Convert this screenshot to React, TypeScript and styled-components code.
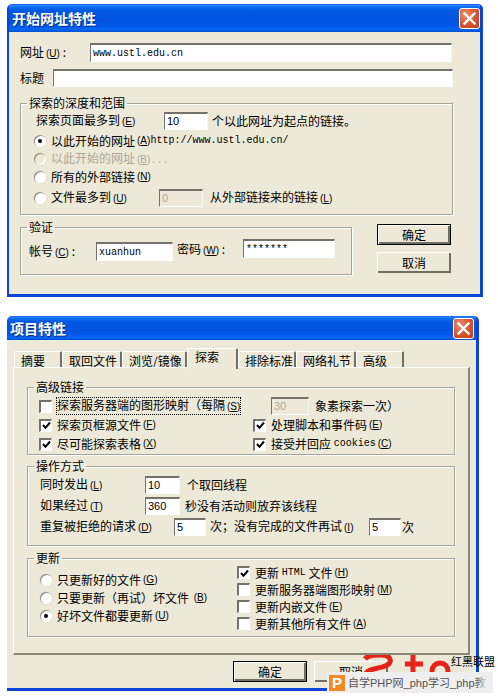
import React from 'react';
import styled, { createGlobalStyle } from 'styled-components';

const GlobalStyle = createGlobalStyle`
  html, body {
    margin: 0;
    padding: 0;
    background: #fff;
  }
  body {
    font-family: "Noto Sans CJK SC", "Liberation Sans", sans-serif;
    font-size: 12px;
    line-height: 14px;
    color: #000;
  }
  * {
    box-sizing: border-box;
  }
`;

const Page = styled.div`
  position: relative;
  width: 498px;
  height: 696px;
  overflow: hidden;
  padding: 4px 0 0 7px;
`;

const Window = styled.section<{ $w: number; $h: number; $left?: boolean; $top?: number }>`
  display: flex;
  flex-direction: column;
  width: ${p => p.$w}px;
  height: ${p => p.$h}px;
  margin-top: ${p => p.$top ?? 0}px;
  background: #ece9d8;
  border-radius: 5px 5px 0 0;
  border-right: 3px solid #0a45d8;
  border-bottom: 3px solid #0a45d8;
  border-left: ${p => (p.$left ? '2px solid #0a45d8' : '0')};
  overflow: hidden;
`;

const TitleBar = styled.header<{ $h: number; $pad: number; $right: number; $offset: number }>`
  display: flex;
  align-items: center;
  justify-content: space-between;
  flex: none;
  height: ${p => p.$h}px;
  margin-left: ${p => p.$offset}px;
  margin-right: -3px;
  padding: 0 ${p => p.$right}px 0 ${p => p.$pad}px;
  background: linear-gradient(180deg, #0a5ee6 0%, #2a86f5 5%, #0f6df0 10%, #0058e2 24%, #0053df 60%, #0058ec 78%, #0a66f2 90%, #0050d4 100%);
  color: #fff;
  font-size: 14px;
  font-weight: 700;
  text-shadow: 1px 1px 0 #0b2f86;
`;

const CloseButton = styled.div`
  display: flex;
  align-items: center;
  justify-content: center;
  width: 21px;
  height: 21px;
  border: 1px solid #fff;
  border-radius: 3px;
  background: radial-gradient(circle at 30% 30%, #ea8f72 0%, #dc5a34 45%, #c23a14 100%);
`;

const CloseIcon = () => (
  <svg width="15" height="15" viewBox="0 0 15 15">
    <path d="M2.5 2.5 L12.5 12.5 M12.5 2.5 L2.5 12.5" stroke="#fff" strokeWidth="2.4" strokeLinecap="square" />
  </svg>
);

const Hot = styled.span`
  font-family: "Liberation Sans", sans-serif;
  font-size: 10px;
  margin-left: 2px;
`;

const Mono = styled.span`
  font-family: "Liberation Mono", monospace;
  font-size: 10px;
`;

const Key = ({ k }: { k: string }) => (
  <Hot>
    (<u>{k}</u>)
  </Hot>
);

const Body = styled.div<{ $pad: string }>`
  flex: 1;
  padding: ${p => p.$pad};
`;

const FieldRow = styled.div<{ $top?: number }>`
  display: flex;
  align-items: center;
  margin-top: ${p => p.$top ?? 0}px;
`;

const Caption = styled.span<{ $w?: number; $ml?: number; $muted?: boolean; $drop?: number }>`
  flex: none;
  width: ${p => (p.$w ? `${p.$w}px` : 'auto')};
  margin-left: ${p => p.$ml ?? 0}px;
  padding-top: ${p => p.$drop ?? 0}px;
  color: ${p => (p.$muted ? '#aca899' : 'inherit')};
  white-space: nowrap;
`;

const TextBox = styled.div<{ $w: number; $h?: number; $top?: number; $disabled?: boolean }>`
  flex: none;
  width: ${p => p.$w}px;
  height: ${p => p.$h ?? 18}px;
  margin-top: ${p => p.$top ?? 0}px;
  padding-left: 2px;
  border-style: solid;
  border-width: 2px 1px 1px 1px;
  border-color: #74726a #f7f6ef #fff #74726a;
  background: ${p => (p.$disabled ? '#ece9d8' : '#fff')};
  color: ${p => (p.$disabled ? '#aca899' : '#000')};
  font-family: "Liberation Sans", sans-serif;
  font-size: 11px;
  line-height: 14px;
  white-space: nowrap;
  overflow: hidden;
`;

const Group = styled.fieldset<{ $w: number; $top?: number }>`
  width: ${p => p.$w}px;
  min-width: 0;
  margin: ${p => p.$top ?? 0}px 0 0;
  padding: 0;
  border: 1px solid #a5a496;
  box-shadow: 1px 1px 0 #fff, inset 1px 1px 0 #fff;
`;

const Legend = styled.legend`
  height: 14px;
  margin-left: 6px;
  padding: 0 2px;
  line-height: 14px;
`;

const GroupBody = styled.div<{ $pad: string }>`
  padding: ${p => p.$pad};
`;

const OptionRow = styled.div<{ $top?: number; $h?: number }>`
  display: flex;
  align-items: center;
  height: ${p => p.$h ?? 18}px;
  margin-top: ${p => p.$top ?? 0}px;
  white-space: nowrap;
`;

const RadioDot = styled.span<{ $on?: boolean; $disabled?: boolean }>`
  display: flex;
  align-items: center;
  justify-content: center;
  flex: none;
  width: 12px;
  height: 12px;
  margin-right: 5px;
  border-radius: 50%;
  background: ${p => (p.$disabled ? '#ece9d8' : '#fff')};
  box-shadow: inset 1px 1px 0 #8d8b7f, inset -1px -1px 0 #fff, 0 0 0 1px #e4e1d0;

  &::after {
    content: '';
    display: ${p => (p.$on ? 'block' : 'none')};
    width: 4px;
    height: 4px;
    border-radius: 50%;
    background: #000;
  }
`;

const CheckFrame = styled.span`
  display: flex;
  align-items: center;
  justify-content: center;
  flex: none;
  width: 13px;
  height: 13px;
  margin-right: 5px;
  border-style: solid;
  border-width: 2px 1px 1px 2px;
  border-color: #74726a #fff #fff #74726a;
  background: #fff;
`;

const CheckBox = ({ on }: { on?: boolean }) => (
  <CheckFrame>
    {on && (
      <svg width="9" height="9" viewBox="0 0 9 9">
        <path d="M1 4 L3.5 6.8 L8 1.5" fill="none" stroke="#000" strokeWidth="2" />
      </svg>
    )}
  </CheckFrame>
);

const BottomRow = styled.div`
  display: flex;
  align-items: flex-start;
  gap: 25px;
  margin-top: 5px;
`;

const ButtonStack = styled.div`
  display: flex;
  flex-direction: column;
  gap: 7px;
  margin-top: 4px;
`;

const PushButton = styled.div<{ $primary?: boolean }>`
  display: flex;
  align-items: center;
  justify-content: center;
  width: 74px;
  height: 21px;
  background: #ece9d8;
  box-shadow: ${p =>
    p.$primary
      ? 'inset 0 0 0 1px #000, inset 2px 2px 0 #fff, inset -3px -3px 0 #716f64'
      : 'inset 1px 1px 0 #fff, inset -2px -2px 0 #716f64'};
`;

const Credentials = styled.div`
  display: flex;
  align-items: flex-start;
  padding: 5px 0 13px 8px;
`;

const Pair = styled.div<{ $top?: number }>`
  display: flex;
  align-items: center;
  margin-top: ${p => p.$top ?? 0}px;
`;

const Tabs = styled.div`
  display: flex;
  align-items: flex-end;
  height: 28px;
  padding: 8px 0 0 7px;
`;

const Tab = styled.div<{ $w: number; $active?: boolean }>`
  position: relative;
  z-index: ${p => (p.$active ? 2 : 0)};
  flex: none;
  width: ${p => p.$w}px;
  height: ${p => (p.$active ? 21 : 17)}px;
  margin-bottom: ${p => (p.$active ? -1 : 0)}px;
  padding: ${p => (p.$active ? '1px 0 0 7px' : '2px 0 0 6px')};
  background: #ece9d8;
  border-top: 1px solid #fff;
  border-left: 1px solid #fff;
  border-right: 2px solid #716f64;
  border-radius: 2px 2px 0 0;
`;

const Panel = styled.div`
  position: relative;
  z-index: 1;
  width: 457px;
  height: 288px;
  margin: -1px 0 0 6px;
  padding: 12px 0 0 13px;
  border-style: solid;
  border-width: 1px 2px 2px 1px;
  border-color: #fff #8a8778 #8a8778 #fff;
  background: #ece9d8;
`;

const LinkGrid = styled.div`
  display: grid;
  grid-template-columns: 214px 1fr;
  row-gap: 1px;
  padding: 3px 0 1px 11px;
`;

const Focused = styled.span`
  outline: 1px dotted #000;
  outline-offset: 0;
`;

const Shifted = styled(OptionRow)`
  padding-left: 18px;
`;

const UpdateColumns = styled.div`
  display: flex;
  align-items: flex-start;
  padding: 0 0 4px 12px;
`;

const UpdateLeft = styled.div`
  flex: none;
  width: 197px;
  padding-top: 6px;
`;

const UpdateRight = styled.div`
  margin-top: -1px;
`;

const Footer = styled.div`
  display: flex;
  gap: 7px;
  margin-top: 6px;
  padding-left: 226px;
`;

const Logo = styled.svg`
  position: absolute;
  left: 360px;
  top: 651px;
`;

const LogoCaption = styled.span`
  position: absolute;
  left: 451px;
  top: 654px;
  font-size: 11px;
  white-space: nowrap;
`;

const AdBar = styled.div`
  position: absolute;
  left: 327px;
  top: 672px;
  display: flex;
  align-items: center;
  gap: 3px;
  width: 166px;
  height: 21px;
  padding-left: 2px;
  background: #eeeeee;
  color: #555;
  font-family: "Liberation Sans", "Noto Sans CJK SC", sans-serif;
  font-size: 11px;
  white-space: nowrap;
  overflow: hidden;

  &::after {
    content: '';
    position: absolute;
    right: 8px;
    top: 0;
    width: 10px;
    height: 100%;
    background: linear-gradient(90deg, rgba(238, 238, 238, 0), rgba(238, 238, 238, 0.7));
  }
`;

const AdIcon = styled.span`
  display: flex;
  align-items: center;
  justify-content: center;
  flex: none;
  width: 16px;
  height: 16px;
  background: #f08a24;
  color: #fff;
  font-family: "Liberation Sans", sans-serif;
  font-size: 15px;
  font-weight: 700;
`;

export default function App() {
  return (
    <Page>
      <GlobalStyle />

      <Window $w={476} $h={293} $left>
        <TitleBar $h={28} $pad={5} $right={3} $offset={-2}>
          <span>开始网址特性</span>
          <CloseButton><CloseIcon /></CloseButton>
        </TitleBar>
        <Body $pad="11px 0 0 11px">
          <FieldRow>
            <Caption $w={70}>网址<Key k="U" /> :</Caption>
            <TextBox $w={362} $h={19}><Mono>www.ustl.edu.cn</Mono></TextBox>
          </FieldRow>
          <FieldRow $top={7}>
            <Caption $w={33}>标题</Caption>
            <TextBox $w={400} />
          </FieldRow>

          <Group $w={433} $top={9}>
            <Legend>探索的深度和范围</Legend>
            <GroupBody $pad="2px 0 7px 13px">
              <FieldRow>
                <Caption $w={128} $ml={2}>探索页面最多到<Key k="E" /></Caption>
                <TextBox $w={44}>10</TextBox>
                <Caption $ml={4}>个以此网址为起点的链接。</Caption>
              </FieldRow>
              <OptionRow $top={2}>
                <RadioDot $on />
                以此开始的网址<Key k="A" /><Mono>http://www.ustl.edu.cn/</Mono>
              </OptionRow>
              <OptionRow>
                <RadioDot $disabled />
                <Caption $muted>以此开始的网址<Key k="B" /><Mono>...</Mono></Caption>
              </OptionRow>
              <OptionRow>
                <RadioDot />
                所有的外部链接<Key k="N" />
              </OptionRow>
              <OptionRow $top={3}>
                <RadioDot />
                <Caption $w={108}>文件最多到<Key k="U" /></Caption>
                <TextBox $w={44} $disabled>0</TextBox>
                <Caption $ml={7}>从外部链接来的链接<Key k="L" /></Caption>
              </OptionRow>
            </GroupBody>
          </Group>

          <BottomRow>
            <Group $w={332}>
              <Legend>验证</Legend>
              <Credentials>
                <Pair $top={3}>
                  <Caption $w={67}>帐号<Key k="C" /> :</Caption>
                  <TextBox $w={77} $h={19}><Mono>xuanhun</Mono></TextBox>
                </Pair>
                <Pair>
                  <Caption $w={66} $ml={4} $drop={3}>密码<Key k="W" /> :</Caption>
                  <TextBox $w={92} $h={19}><Mono>*******</Mono></TextBox>
                </Pair>
              </Credentials>
            </Group>
            <ButtonStack>
              <PushButton $primary>确定</PushButton>
              <PushButton>取消</PushButton>
            </ButtonStack>
          </BottomRow>
        </Body>
      </Window>

      <Window $w={472} $h={375} $top={19}>
        <TitleBar $h={24} $pad={3} $right={5} $offset={0}>
          <span>项目特性</span>
          <CloseButton><CloseIcon /></CloseButton>
        </TitleBar>

        <Tabs>
          <Tab $w={48}>摘要</Tab>
          <Tab $w={60}>取回文件</Tab>
          <Tab $w={65}>浏览/镜像</Tab>
          <Tab $w={51} $active>探索</Tab>
          <Tab $w={58}>排除标准</Tab>
          <Tab $w={60}>网络礼节</Tab>
          <Tab $w={48}>高级</Tab>
        </Tabs>

        <Panel>
          <Group $w={428}>
            <Legend>高级链接</Legend>
            <LinkGrid>
              <OptionRow>
                <CheckBox />
                <Focused>探索服务器端的图形映射（每隔<Key k="S" /></Focused>
              </OptionRow>
              <Shifted>
                <TextBox $w={38} $disabled>30</TextBox>
                <Caption $ml={6}>象素探索一次）</Caption>
              </Shifted>
              <OptionRow>
                <CheckBox on />
                探索页框源文件<Key k="F" />
              </OptionRow>
              <OptionRow>
                <CheckBox on />
                处理脚本和事件码<Key k="E" />
              </OptionRow>
              <OptionRow>
                <CheckBox on />
                尽可能探索表格<Key k="X" />
              </OptionRow>
              <OptionRow>
                <CheckBox on />
                接受并回应&nbsp;<Mono>cookies</Mono><Key k="C" />
              </OptionRow>
            </LinkGrid>
          </Group>

          <Group $w={428} $top={4}>
            <Legend>操作方式</Legend>
            <GroupBody $pad="3px 0 9px 12px">
              <FieldRow>
                <Caption $w={105}>同时发出<Key k="L" /></Caption>
                <TextBox $w={35} $h={18}>10</TextBox>
                <Caption $ml={7}>个取回线程</Caption>
              </FieldRow>
              <FieldRow $top={3}>
                <Caption $w={105}>如果经过<Key k="T" /></Caption>
                <TextBox $w={35} $h={18}>360</TextBox>
                <Caption $ml={5}>秒没有活动则放弃该线程</Caption>
              </FieldRow>
              <FieldRow $top={3}>
                <Caption $w={134}>重复被拒绝的请求<Key k="D" /></Caption>
                <TextBox $w={32} $h={18}>5</TextBox>
                <Caption $w={159} $ml={4}>次；没有完成的文件再试<Key k="I" /></Caption>
                <TextBox $w={32} $h={18}>5</TextBox>
                <Caption $ml={1}>次</Caption>
              </FieldRow>
            </GroupBody>
          </Group>

          <Group $w={428} $top={5}>
            <Legend>更新</Legend>
            <UpdateColumns>
              <UpdateLeft>
                <OptionRow>
                  <RadioDot />
                  只更新好的文件<Key k="G" />
                </OptionRow>
                <OptionRow>
                  <RadioDot />
                  只要更新（再试）坏文件&nbsp;<Key k="B" />
                </OptionRow>
                <OptionRow>
                  <RadioDot $on />
                  好坏文件都要更新<Key k="U" />
                </OptionRow>
              </UpdateLeft>
              <UpdateRight>
                <OptionRow $h={17}>
                  <CheckBox on />
                  更新&nbsp;<Mono>HTML</Mono>&nbsp;文件<Key k="H" />
                </OptionRow>
                <OptionRow $h={17}>
                  <CheckBox />
                  更新服务器端图形映射<Key k="M" />
                </OptionRow>
                <OptionRow $h={17}>
                  <CheckBox />
                  更新内嵌文件<Key k="E" />
                </OptionRow>
                <OptionRow $h={17}>
                  <CheckBox />
                  更新其他所有文件<Key k="A" />
                </OptionRow>
              </UpdateRight>
            </UpdateColumns>
          </Group>
        </Panel>

        <Footer>
          <PushButton $primary>确定</PushButton>
          <PushButton>取消</PushButton>
        </Footer>
      </Window>

      <Logo width="94" height="24" viewBox="0 0 94 24">
        <path d="M5 8 C8 4 14 4 22 4 C29 4 31 8 30 11 C29 15 22 16 14 18 C8 19 5 21 5 26" fill="none" stroke="#e5231b" strokeWidth="5" />
        <path d="M53 2 V26 M45 13 H63" fill="none" stroke="#e5231b" strokeWidth="5" />
        <circle cx="80" cy="20" r="8" fill="none" stroke="#e5231b" strokeWidth="5" />
      </Logo>
      <LogoCaption>红黑联盟</LogoCaption>
      <AdBar>
        <AdIcon>P</AdIcon>
        <span>自学PHP网_php学习_php教</span>
      </AdBar>
    </Page>
  );
}
